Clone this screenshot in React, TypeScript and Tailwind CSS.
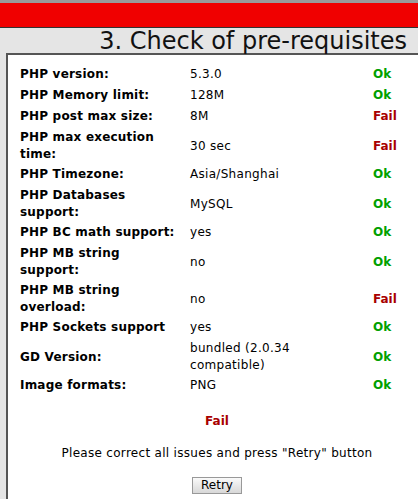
import React from "react";

type Row = { label: string; value: string; ok: boolean; wrap?: boolean; two?: boolean };

const rows: Row[] = [
  { label: "PHP version:", value: "5.3.0", ok: true },
  { label: "PHP Memory limit:", value: "128M", ok: true },
  { label: "PHP post max size:", value: "8M", ok: false },
  { label: "PHP max execution time:", value: "30 sec", ok: false, wrap: true, two: true },
  { label: "PHP Timezone:", value: "Asia/Shanghai", ok: true },
  { label: "PHP Databases support:", value: "MySQL", ok: true, wrap: true, two: true },
  { label: "PHP BC math support:", value: "yes", ok: true },
  { label: "PHP MB string support:", value: "no", ok: true, wrap: true, two: true },
  { label: "PHP MB string overload:", value: "no", ok: false, wrap: true, two: true },
  { label: "PHP Sockets support", value: "yes", ok: true },
  { label: "GD Version:", value: "bundled (2.0.34 compatible)", ok: true, two: true },
  { label: "Image formats:", value: "PNG", ok: true },
];

export default function App() {
  return (
    <div
      className="w-[418px] h-[499px] overflow-hidden bg-[#e5e5e5] text-[12px] text-black"
      style={{ fontFamily: '"DejaVu Sans", Verdana, sans-serif' }}
    >
      <div className="h-[3px] bg-[#9a9a9a]" />
      <div className="h-[25px] bg-[#f00000] border-b border-[#333]" />
      <div className="h-[25px] flex items-center justify-end pr-[11px]">
        <h1 className="text-[24px] leading-[25px] text-[#111] font-normal mt-[1px]">
          3. Check of pre-requisites
        </h1>
      </div>
      <div className="ml-[6px] w-[420px] bg-white border-t-2 border-l-2 border-t-[#555] border-l-[#555] pt-[9px] pl-[12px] h-[460px]">
        <div className="grid grid-cols-[170px_183px_1fr]">
          {rows.map((r) => {
            const pad = r.two ? "pt-[2px] pb-[1px]" : "py-[2px]";
            return (
              <React.Fragment key={r.label}>
                <div
                  className={
                    pad +
                    " pr-[18px] font-bold tracking-[0.2px] leading-[17px] flex items-center " +
                    (r.wrap ? "" : "whitespace-nowrap")
                  }
                >
                  {r.label}
                </div>
                <div className={pad + " leading-[17px] tracking-[0.3px] flex items-center"}>
                  <span className="max-w-[140px]">{r.value}</span>
                </div>
                <div
                  className={
                    pad +
                    " leading-[17px] font-bold flex items-center " +
                    (r.ok ? "text-[#00a000]" : "text-[#a80000]")
                  }
                >
                  {r.ok ? "Ok" : "Fail"}
                </div>
              </React.Fragment>
            );
          })}
        </div>
        <div className="pr-[12px] flex flex-col items-center">
          <div className="mt-[17px] font-bold text-[12px] leading-[17px] text-[#a80000]">
            Fail
          </div>
          <div className="mt-[15px] leading-[17px] tracking-[0.3px]">
            Please correct all issues and press "Retry" button
          </div>
          <button className="mt-[15px] h-[17px] w-[50px] border border-[#999] bg-gradient-to-b from-[#fafafa] to-[#d8d8d8] text-[12px] leading-[15px] text-black">
            Retry
          </button>
        </div>
      </div>
    </div>
  );
}
